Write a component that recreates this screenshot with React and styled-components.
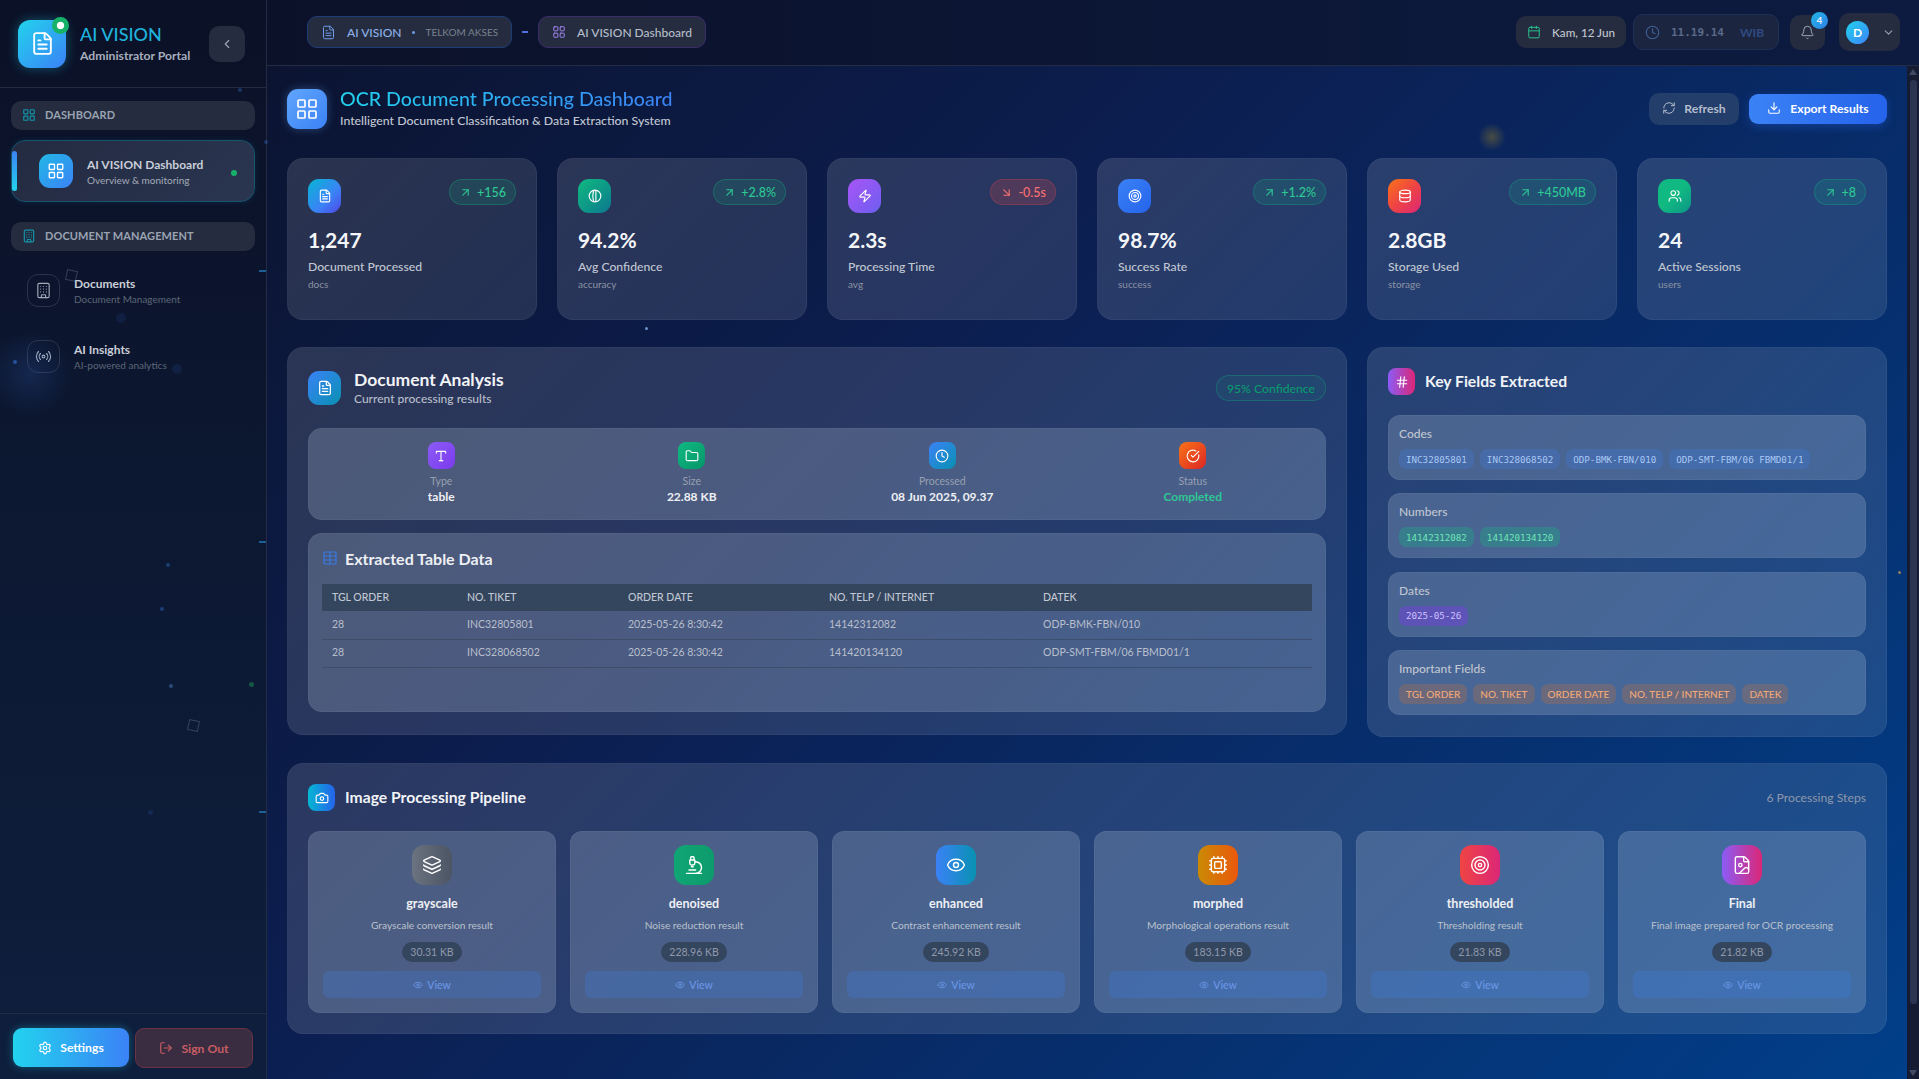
import React from "react";
import styled, { createGlobalStyle } from "styled-components";
import {
  FileText,
  LayoutGrid,
  ChevronLeft,
  ChevronDown,
  Building,
  Radio,
  Calendar,
  Clock,
  Bell,
  RefreshCw,
  Download,
  ArrowUpRight,
  ArrowDownRight,
  Zap,
  Target,
  Database,
  Users,
  Type,
  Folder,
  CircleCheckBig,
  Hash,
  Table,
  Camera,
  Layers,
  Microscope,
  Eye,
  Cpu,
  FileImage,
  Settings,
  LogOut,
} from "lucide-react";

const ConfidenceIcon = ({ size, strokeWidth }) => (
  <svg width={size} height={size} viewBox="0 0 24 24" fill="none" stroke="currentColor" strokeWidth={strokeWidth}>
    <circle cx="12" cy="12" r="10" />
    <path d="M10 2.5C8 8 8 16 10 21.5M13.5 2.5v19" />
  </svg>
);

const stats = [
  { icon: FileText, grad: "#06b6d4, #3b82f6 60%, #4f46e5", change: "+156", value: "1,247", label: "Document Processed", sub: "docs" },
  { icon: ConfidenceIcon, grad: "#10b981, #0d9488 60%, #0e7490", change: "+2.8%", value: "94.2%", label: "Avg Confidence", sub: "accuracy" },
  { icon: Zap, grad: "#a855f7, #6d5ef0", change: "-0.5s", down: true, value: "2.3s", label: "Processing Time", sub: "avg" },
  { icon: Target, grad: "#3b82f6, #2563eb", change: "+1.2%", value: "98.7%", label: "Success Rate", sub: "success" },
  { icon: Database, grad: "#f97316, #ef4444 50%, #db2777", change: "+450MB", value: "2.8GB", label: "Storage Used", sub: "storage" },
  { icon: Users, grad: "#10b981, #10b981 50%, #0d9488", change: "+8", value: "24", label: "Active Sessions", sub: "users" },
];

const infos = [
  { icon: Type, grad: "#8b5cf6, #7c3aed", label: "Type", value: "table" },
  { icon: Folder, grad: "#10b981, #059669", label: "Size", value: "22.88 KB" },
  { icon: Clock, grad: "#3b82f6, #0891b2", label: "Processed", value: "08 Jun 2025, 09.37" },
  { icon: CircleCheckBig, grad: "#f97316, #dc2626", label: "Status", value: "Completed", ok: true },
];

const columns = ["TGL ORDER", "NO. TIKET", "ORDER DATE", "NO. TELP / INTERNET", "DATEK"];
const rows = [
  ["28", "INC32805801", "2025-05-26 8:30:42", "14142312082", "ODP-BMK-FBN/010"],
  ["28", "INC328068502", "2025-05-26 8:30:42", "141420134120", "ODP-SMT-FBM/06 FBMD01/1"],
];

const fields = [
  { label: "Codes", tone: "blue", chips: ["INC32805801", "INC328068502", "ODP-BMK-FBN/010", "ODP-SMT-FBM/06 FBMD01/1"] },
  { label: "Numbers", tone: "green", chips: ["14142312082", "141420134120"] },
  { label: "Dates", tone: "purple", chips: ["2025-05-26"] },
  { label: "Important Fields", tone: "orange", chips: columns },
];

const steps = [
  { icon: Layers, grad: "#6b7280, #4b5563", name: "grayscale", desc: "Grayscale conversion result", size: "30.31 KB" },
  { icon: Microscope, grad: "#10a574, #0d9b6c", name: "denoised", desc: "Noise reduction result", size: "228.96 KB" },
  { icon: Eye, grad: "#3b82f6, #0891b2", name: "enhanced", desc: "Contrast enhancement result", size: "245.92 KB" },
  { icon: Cpu, grad: "#ca8a04, #ea580c", name: "morphed", desc: "Morphological operations result", size: "183.15 KB" },
  { icon: Target, grad: "#ef4444, #db2777", name: "thresholded", desc: "Thresholding result", size: "21.83 KB" },
  { icon: FileImage, grad: "#8b5cf6, #db2777", name: "Final", desc: "Final image prepared for OCR processing", size: "21.82 KB" },
];

const particles = [
  { x: 166, y: 563, s: 4, c: "#3b82f6", o: 0.35 },
  { x: 160, y: 607, s: 4, c: "#3b82f6", o: 0.35 },
  { x: 169, y: 684, s: 4, c: "#60a5fa", o: 0.35 },
  { x: 249, y: 682, s: 5, c: "#22c55e", o: 0.35 },
  { x: 645, y: 327, s: 3, c: "#93c5fd", o: 0.7 },
  { x: 1898, y: 571, s: 3, c: "#d0a050", o: 0.7 },
  { x: 148, y: 810, s: 5, c: "#3b82f6", o: 0.15 },
  { x: 116, y: 313, s: 10, c: "#3b82f6", o: 0.1 },
  { x: 238, y: 88, s: 4, c: "#3b82f6", o: 0.3 },
  { x: 264, y: 140, s: 4, c: "#3b82f6", o: 0.3 },
  { x: 13, y: 360, s: 4, c: "#3b82f6", o: 0.5 },
  { x: 172, y: 364, s: 10, c: "#3b82f6", o: 0.1 },
];

const ticks = [270, 541, 811];

const App = () => {
  return (
    <>
      <GlobalStyle />
      <StPage>
        <StSidebar>
          <StBrand>
            <StLogo>
              <FileText size={25} strokeWidth={1.8} />
              <StLogoDot />
            </StLogo>
            <StBrandText>
              <StBrandName>AI VISION</StBrandName>
              <StBrandSub>Administrator Portal</StBrandSub>
            </StBrandText>
            <StCollapse>
              <ChevronLeft size={14} />
            </StCollapse>
          </StBrand>

          <StNav>
            <StSection>
              <LayoutGrid size={14} color="#1593a8" />
              DASHBOARD
            </StSection>
            <StActiveItem>
              <StActiveBar />
              <StActiveIcon>
                <LayoutGrid size={18} strokeWidth={1.8} />
              </StActiveIcon>
              <StItemText>
                <StItemTitle>AI VISION Dashboard</StItemTitle>
                <StActiveSub>Overview &amp; monitoring</StActiveSub>
              </StItemText>
              <StActiveDot />
            </StActiveItem>

            <StSection $spaced>
              <Building size={14} color="#1593a8" />
              DOCUMENT MANAGEMENT
            </StSection>
            <StItem>
              <StItemIcon>
                <Building size={17} strokeWidth={1.6} />
              </StItemIcon>
              <StItemText>
                <StItemTitle>Documents</StItemTitle>
                <StItemSub>Document Management</StItemSub>
              </StItemText>
            </StItem>
            <StItem>
              <StItemIcon>
                <Radio size={17} strokeWidth={1.6} />
              </StItemIcon>
              <StItemText>
                <StItemTitle>AI Insights</StItemTitle>
                <StItemSub>AI-powered analytics</StItemSub>
              </StItemText>
            </StItem>
          </StNav>

          <StSideFooter>
            <StSettings>
              <Settings size={14} />
              Settings
            </StSettings>
            <StSignOut>
              <LogOut size={14} />
              Sign Out
            </StSignOut>
          </StSideFooter>
        </StSidebar>

        <StRight>
          <StTopbar>
            <StCrumbs>
              <StCrumb $tone="blue">
                <FileText size={15} color="#6f9ce8" strokeWidth={1.6} />
                <StCrumbBrand>AI VISION</StCrumbBrand>
                <StCrumbDot />
                <StCrumbOrg>TELKOM AKSES</StCrumbOrg>
              </StCrumb>
              <StCrumbDash />
              <StCrumb $tone="purple">
                <LayoutGrid size={14} color="#a78bfa" strokeWidth={1.6} />
                <StCrumbPage>AI VISION Dashboard</StCrumbPage>
              </StCrumb>
            </StCrumbs>
            <StTopActions>
              <StDate>
                <Calendar size={14} color="#2bc08f" strokeWidth={1.7} />
                Kam, 12 Jun
              </StDate>
              <StTime>
                <Clock size={15} color="#3f5f93" strokeWidth={1.8} />
                <StClock>11.19.14</StClock>
                <StZone>WIB</StZone>
              </StTime>
              <StBell>
                <Bell size={15} strokeWidth={1.5} />
                <StBadge>4</StBadge>
              </StBell>
              <StUser>
                <StAvatar>D</StAvatar>
                <ChevronDown size={13} color="#94a3b8" />
              </StUser>
            </StTopActions>
          </StTopbar>

          <StBody>
            <StMain>
              <StPageHead>
                <StPageTitleWrap>
                  <StPageIcon>
                    <LayoutGrid size={24} strokeWidth={1.7} />
                  </StPageIcon>
                  <div>
                    <StPageTitle>OCR Document Processing Dashboard</StPageTitle>
                    <StPageSub>Intelligent Document Classification &amp; Data Extraction System</StPageSub>
                  </div>
                </StPageTitleWrap>
                <StHeadActions>
                  <StRefresh>
                    <RefreshCw size={14} strokeWidth={1.7} />
                    Refresh
                  </StRefresh>
                  <StExport>
                    <Download size={14} strokeWidth={1.9} />
                    Export Results
                  </StExport>
                </StHeadActions>
              </StPageHead>

              <StStats>
                {stats.map((stat) => (
                  <StStatCard key={stat.label}>
                    <StStatTop>
                      <StStatIcon $grad={stat.grad}>
                        <stat.icon size={14} strokeWidth={1.9} />
                      </StStatIcon>
                      <StChange $down={stat.down}>
                        {stat.down ? <ArrowDownRight size={13} /> : <ArrowUpRight size={13} />}
                        {stat.change}
                      </StChange>
                    </StStatTop>
                    <StStatValue>{stat.value}</StStatValue>
                    <StStatLabel>{stat.label}</StStatLabel>
                    <StStatSub>{stat.sub}</StStatSub>
                  </StStatCard>
                ))}
              </StStats>

              <StColumns>
                <StAnalysis>
                  <StAnalysisHead>
                    <StTitleRow>
                      <StPanelIcon $grad="#3b82f6, #0891b2">
                        <FileText size={16} strokeWidth={1.9} />
                      </StPanelIcon>
                      <div>
                        <StAnalysisTitle>Document Analysis</StAnalysisTitle>
                        <StAnalysisSub>Current processing results</StAnalysisSub>
                      </div>
                    </StTitleRow>
                    <StConfidence>95% Confidence</StConfidence>
                  </StAnalysisHead>

                  <StInfoStrip>
                    {infos.map((info) => (
                      <StInfo key={info.label}>
                        <StInfoIcon $grad={info.grad}>
                          <info.icon size={14} strokeWidth={1.9} />
                        </StInfoIcon>
                        <StInfoLabel>{info.label}</StInfoLabel>
                        <StInfoValue $ok={info.ok}>{info.value}</StInfoValue>
                      </StInfo>
                    ))}
                  </StInfoStrip>

                  <StTableBox>
                    <StTableTitle>
                      <Table size={16} color="#3b78e0" strokeWidth={1.8} />
                      Extracted Table Data
                    </StTableTitle>
                    <StTable>
                      <thead>
                        <tr>
                          {columns.map((col) => (
                            <StTh key={col}>{col}</StTh>
                          ))}
                        </tr>
                      </thead>
                      <tbody>
                        {rows.map((row) => (
                          <tr key={row[1]}>
                            {row.map((cell) => (
                              <StTd key={cell}>{cell}</StTd>
                            ))}
                          </tr>
                        ))}
                      </tbody>
                    </StTable>
                  </StTableBox>
                </StAnalysis>

                <StKeyFields>
                  <StTitleRow>
                    <StSmallIcon $grad="#8b5cf6, #db2777">
                      <Hash size={14} strokeWidth={2} />
                    </StSmallIcon>
                    <StPanelTitle>Key Fields Extracted</StPanelTitle>
                  </StTitleRow>
                  <StFieldList>
                    {fields.map((field) => (
                      <StField key={field.label}>
                        <StFieldLabel>{field.label}</StFieldLabel>
                        <StChips>
                          {field.chips.map((chip) => (
                            <StChip key={chip} $tone={field.tone}>
                              {chip}
                            </StChip>
                          ))}
                        </StChips>
                      </StField>
                    ))}
                  </StFieldList>
                </StKeyFields>
              </StColumns>

              <StPipeline>
                <StPipelineHead>
                  <StTitleRow>
                    <StSmallIcon $grad="#06b6d4, #2563eb">
                      <Camera size={14} strokeWidth={1.9} />
                    </StSmallIcon>
                    <StPanelTitle>Image Processing Pipeline</StPanelTitle>
                  </StTitleRow>
                  <StStepCount>6 Processing Steps</StStepCount>
                </StPipelineHead>
                <StSteps>
                  {steps.map((step) => (
                    <StStep key={step.name}>
                      <StStepIcon $grad={step.grad}>
                        <step.icon size={20} strokeWidth={1.7} />
                      </StStepIcon>
                      <StStepName>{step.name}</StStepName>
                      <StStepDesc>{step.desc}</StStepDesc>
                      <StStepSize>{step.size}</StStepSize>
                      <StView>
                        <Eye size={10} />
                        View
                      </StView>
                    </StStep>
                  ))}
                </StSteps>
              </StPipeline>
            </StMain>
            <StScrollbar>
              <StScrollArrow />
              <StScrollThumb />
              <StScrollArrow $down />
            </StScrollbar>
          </StBody>
        </StRight>

        {particles.map((p) => (
          <StParticle key={`${p.x}-${p.y}`} $x={p.x} $y={p.y} $s={p.s} $c={p.c} $o={p.o} />
        ))}
        {ticks.map((y) => (
          <StTick key={y} $y={y} />
        ))}
        <StGlow $x={30} $y={373} $s={42} $c="rgba(59,130,246,0.16)" />
        <StGlow $x={1492} $y={137} $s={14} $c="rgba(234,179,8,0.28)" />
        <StFloatSquare $x={188} $y={720} />
        <StFloatSquare $x={66} $y={270} />
      </StPage>
    </>
  );
};

const GlobalStyle = createGlobalStyle`
  * {
    box-sizing: border-box;
  }
  body {
    margin: 0;
    font-family: "Lato", "Noto Sans", sans-serif;
    color: #fff;
    background: #0b1026;
  }
`;

const StPage = styled.div`
  position: relative;
  display: grid;
  grid-template-columns: 267px 1fr;
  height: 100vh;
  overflow: hidden;
  background: linear-gradient(135deg, #0b1026 0%, #0c1f52 45%, #013f8a 100%);
`;

const StSidebar = styled.aside`
  display: flex;
  flex-direction: column;
  height: 100vh;
  background: linear-gradient(180deg, #0b1127 0%, #0e1f3d 100%);
  border-right: 1px solid #232c42;
`;

const StBrand = styled.div`
  display: flex;
  align-items: center;
  height: 88px;
  padding: 0 21px 0 18px;
  border-bottom: 1px solid #232c42;
`;

const StLogo = styled.div`
  position: relative;
  flex: none;
  display: flex;
  align-items: center;
  justify-content: center;
  width: 48px;
  height: 48px;
  border-radius: 12px;
  color: #fff;
  background: linear-gradient(135deg, #22d3ee, #3b82f6);
  box-shadow: 0 0 12px rgba(34, 211, 238, 0.35);
`;

const StLogoDot = styled.span`
  position: absolute;
  top: -3px;
  right: -3px;
  width: 17px;
  height: 17px;
  border-radius: 50%;
  background: radial-gradient(circle, #fff 28%, #17b26a 34%);
`;

const StBrandText = styled.div`
  flex: 1;
  margin-left: 14px;
`;

const StBrandName = styled.div`
  font-size: 18px;
  line-height: 23px;
  font-weight: 500;
  color: #1fb3dc;
`;

const StBrandSub = styled.div`
  font-size: 12.2px;
  line-height: 19px;
  font-weight: 700;
  color: #a7afbd;
  white-space: nowrap;
`;

const StCollapse = styled.button`
  display: flex;
  align-items: center;
  justify-content: center;
  width: 36px;
  height: 36px;
  padding: 0;
  border: 0;
  border-radius: 10px;
  color: #9ca3af;
  background: #252c3f;
`;

const StNav = styled.nav`
  display: flex;
  flex-direction: column;
  padding: 13px 11px;
`;

const StSection = styled.div`
  display: flex;
  align-items: center;
  gap: 9px;
  height: 29px;
  margin-top: ${({ $spaced }) => ($spaced ? "20px" : "0")};
  margin-bottom: ${({ $spaced }) => ($spaced ? "8px" : "10px")};
  padding: 0 11px 2px;
  border-radius: 10px;
  font-size: 11px;
  font-weight: 700;
  letter-spacing: 0.1px;
  color: #9aa3b2;
  background: #252c3f;
`;

const StItem = styled.div`
  display: flex;
  align-items: center;
  gap: 14px;
  height: 62px;
  margin-bottom: 4px;
  padding-left: 16px;
`;

const StActiveItem = styled(StItem)`
  position: relative;
  margin-bottom: 0;
  padding-left: 27px;
  border: 1px solid #17546f;
  border-radius: 14px;
  background: linear-gradient(135deg, #232b41, #2a3550);
  box-shadow: 0 0 6px rgba(34, 211, 238, 0.1);
`;

const StActiveBar = styled.span`
  position: absolute;
  left: 0;
  top: 10px;
  bottom: 10px;
  width: 5px;
  border-radius: 3px;
  background: linear-gradient(180deg, #3b82f6, #22d3ee);
`;

const StActiveIcon = styled.div`
  display: flex;
  align-items: center;
  justify-content: center;
  width: 34px;
  height: 34px;
  border-radius: 11px;
  color: #fff;
  background: linear-gradient(135deg, #22b8e6, #3b82f6);
`;

const StItemIcon = styled.div`
  display: flex;
  align-items: center;
  justify-content: center;
  width: 33px;
  height: 33px;
  border: 1px solid #2a3348;
  border-radius: 11px;
  color: #a4acba;
`;

const StItemText = styled.div`
  display: flex;
  flex-direction: column;
`;

const StItemTitle = styled.span`
  font-size: 12px;
  line-height: 17px;
  font-weight: 700;
  color: #c9ced8;
`;

const StItemSub = styled.span`
  font-size: 10px;
  line-height: 14px;
  color: #5d6678;
`;

const StActiveSub = styled(StItemSub)`
  color: #a3abb9;
`;

const StActiveDot = styled.span`
  position: absolute;
  right: 17px;
  top: 29px;
  width: 6px;
  height: 6px;
  border-radius: 50%;
  background: #17b26a;
`;

const StSideFooter = styled.div`
  display: flex;
  gap: 6px;
  margin-top: auto;
  padding: 14px 13px 11px;
  border-top: 1px solid #232c42;
`;

const StSettings = styled.button`
  display: flex;
  align-items: center;
  justify-content: center;
  gap: 8px;
  width: 116px;
  height: 39px;
  border: 0;
  border-radius: 9px;
  font: 700 12.2px "Lato", sans-serif;
  color: #fff;
  background: linear-gradient(90deg, #22d3ee, #3b82f6);
  box-shadow: 0 0 8px rgba(34, 211, 238, 0.35);
`;

const StSignOut = styled.button`
  display: flex;
  align-items: center;
  justify-content: center;
  gap: 8px;
  width: 118px;
  height: 40px;
  border: 1px solid #6a3243;
  border-radius: 9px;
  font: 700 12.2px "Lato", sans-serif;
  color: #c85d63;
  background: #3a2d42;
`;

const StRight = styled.div`
  display: flex;
  flex-direction: column;
  min-width: 0;
  height: 100vh;
`;

const StTopbar = styled.header`
  flex: none;
  display: flex;
  align-items: center;
  justify-content: space-between;
  height: 66px;
  padding: 0 19px 1px 40px;
  border-bottom: 1px solid #232c42;
  background: linear-gradient(90deg, #0b1128, #0d1b41);
`;

const StCrumbs = styled.div`
  display: flex;
  align-items: center;
  gap: 10px;
`;

const StCrumb = styled.div`
  display: flex;
  align-items: center;
  height: 32px;
  padding: 0 13px;
  border: 1px solid ${({ $tone }) => ($tone === "blue" ? "#1f3d75" : "#3b2c6b")};
  border-radius: 10px;
  background: #252c3f;
`;

const StCrumbBrand = styled.span`
  margin-left: 11px;
  font-size: 12px;
  font-weight: 500;
  color: #8fb0e8;
`;

const StCrumbDot = styled.span`
  width: 3px;
  height: 3px;
  margin: 0 11px 0 10px;
  border-radius: 50%;
  background: #6f9ce8;
`;

const StCrumbOrg = styled.span`
  font-size: 10px;
  color: #79828f;
`;

const StCrumbDash = styled.span`
  width: 6px;
  height: 2px;
  background: #4f6fe0;
`;

const StCrumbPage = styled.span`
  margin-left: 11px;
  font-size: 12px;
  font-weight: 500;
  color: #b6bdc9;
`;

const StTopActions = styled.div`
  display: flex;
  align-items: center;
`;

const StDate = styled.div`
  display: flex;
  align-items: center;
  gap: 11px;
  height: 32px;
  padding: 0 11px;
  border-radius: 10px;
  font-size: 11.7px;
  font-weight: 500;
  color: #c1c6cf;
  background: #252c3f;
`;

const StTime = styled.div`
  display: flex;
  align-items: center;
  width: 146px;
  height: 36px;
  margin-left: 7px;
  padding: 0 11px;
  border: 1px solid #1f2f57;
  border-radius: 10px;
  background: #1c2540;
`;

const StClock = styled.span`
  margin-left: 11px;
  font: 700 11px "DejaVu Sans Mono", monospace;
  color: #5a6a8a;
`;

const StZone = styled.span`
  margin-left: 16px;
  font-size: 12px;
  font-weight: 700;
  color: #2f4a80;
`;

const StBell = styled.div`
  position: relative;
  display: flex;
  align-items: center;
  justify-content: center;
  width: 35px;
  height: 35px;
  margin-left: 11px;
  border-radius: 10px;
  color: #a4acba;
  background: #252c3f;
`;

const StBadge = styled.span`
  position: absolute;
  top: -3px;
  right: -3px;
  display: flex;
  align-items: center;
  justify-content: center;
  width: 17px;
  height: 17px;
  border-radius: 50%;
  font-size: 10px;
  font-weight: 900;
  color: #dbeafe;
  background: linear-gradient(135deg, #22b8e6, #2f7fe8);
`;

const StUser = styled.div`
  display: flex;
  align-items: center;
  gap: 13px;
  width: 61px;
  height: 38px;
  margin-left: 14px;
  padding-left: 7px;
  border-radius: 10px;
  background: #252c3f;
`;

const StAvatar = styled.div`
  display: flex;
  align-items: center;
  justify-content: center;
  width: 23px;
  height: 23px;
  border-radius: 50%;
  font-size: 12px;
  font-weight: 700;
  background: linear-gradient(135deg, #22d3ee, #3b82f6);
`;

const StBody = styled.div`
  flex: 1;
  display: flex;
  min-height: 0;
`;

const StMain = styled.main`
  flex: 1;
  min-width: 0;
  overflow: hidden;
  padding: 23px 20px 0;
`;

const StScrollbar = styled.div`
  flex: none;
  display: flex;
  flex-direction: column;
  align-items: center;
  justify-content: space-between;
  width: 12px;
  padding: 3px 0;
  background: #151b33;
`;

const StScrollArrow = styled.span`
  width: 0;
  height: 0;
  border-left: 4px solid transparent;
  border-right: 4px solid transparent;
  border-bottom: ${({ $down }) => ($down ? "0" : "6px solid #3f4a66")};
  border-top: ${({ $down }) => ($down ? "6px solid #3f4a66" : "0")};
`;

const StScrollThumb = styled.span`
  width: 7px;
  height: 924px;
  margin-bottom: 62px;
  border-radius: 4px;
  background: #2b3552;
`;

const StPageHead = styled.div`
  display: flex;
  align-items: center;
  justify-content: space-between;
  height: 40px;
  margin-bottom: 29px;
`;

const StPageTitleWrap = styled.div`
  display: flex;
  align-items: center;
  gap: 13px;
`;

const StPageIcon = styled.div`
  display: flex;
  align-items: center;
  justify-content: center;
  width: 40px;
  height: 40px;
  border-radius: 11px;
  color: #fff;
  background: linear-gradient(135deg, #60a5fa, #3b82f6);
  box-shadow: 0 0 10px rgba(96, 165, 250, 0.35);
`;

const StPageTitle = styled.h1`
  margin: -2px 0 0;
  font-size: 19.6px;
  line-height: 25px;
  font-weight: 500;
  white-space: nowrap;
  color: transparent;
  background: linear-gradient(90deg, #22d3ee, #3b82f6);
  background-clip: text;
  -webkit-background-clip: text;
`;

const StPageSub = styled.p`
  margin: 1px 0 0;
  font-size: 12.3px;
  line-height: 18px;
  font-weight: 500;
  color: #c2c8d3;
`;

const StHeadActions = styled.div`
  display: flex;
  align-items: center;
  gap: 10px;
`;

const StRefresh = styled.button`
  display: flex;
  align-items: center;
  justify-content: center;
  gap: 8px;
  width: 90px;
  height: 32px;
  padding: 0 0 2px;
  border: 0;
  border-radius: 10px;
  font: 700 12.2px "Lato", sans-serif;
  color: #b4bdcc;
  background: #233e6b;
`;

const StExport = styled.button`
  display: flex;
  align-items: center;
  justify-content: center;
  gap: 9px;
  width: 138px;
  height: 30px;
  padding: 0 0 2px;
  border: 0;
  border-radius: 9px;
  font: 700 12.2px "Lato", sans-serif;
  color: #fff;
  background: linear-gradient(90deg, #3b82f6, #2563eb);
  box-shadow: 0 3px 10px rgba(37, 99, 235, 0.35);
`;

const StStats = styled.section`
  display: grid;
  grid-template-columns: repeat(6, 1fr);
  gap: 20px;
  margin-bottom: 27px;
`;

const glass = `
  border: 1px solid rgba(255, 255, 255, 0.04);
  background: linear-gradient(135deg, rgba(255, 255, 255, 0.13), rgba(255, 255, 255, 0.1));
`;

const inset = `
  border: 1px solid rgba(255, 255, 255, 0.04);
  background: rgba(190, 205, 225, 0.24);
`;

const StStatCard = styled.article`
  ${glass}
  height: 162px;
  padding: 20px;
  border-radius: 16px;
`;

const StStatTop = styled.div`
  display: flex;
  align-items: flex-start;
  justify-content: space-between;
  height: 42px;
`;

const StStatIcon = styled.div`
  display: flex;
  align-items: center;
  justify-content: center;
  width: 33px;
  height: 34px;
  border-radius: 11px;
  color: #fff;
  background: linear-gradient(135deg, ${({ $grad }) => $grad});
`;

const StChange = styled.span`
  display: flex;
  align-items: center;
  gap: 5px;
  height: 26px;
  padding: 0 9px;
  border: 1px solid ${({ $down }) => ($down ? "rgba(239,68,68,0.25)" : "rgba(16,185,129,0.3)")};
  border-radius: 13px;
  font-size: 12.5px;
  font-weight: 500;
  color: ${({ $down }) => ($down ? "#f87171" : "#2fc794")};
  background: ${({ $down }) => ($down ? "rgba(239,68,68,0.2)" : "rgba(16,185,129,0.15)")};
`;

const StStatValue = styled.div`
  margin-top: 5px;
  font-size: 21px;
  line-height: 28px;
  font-weight: 700;
  color: #f4f6f9;
`;

const StStatLabel = styled.div`
  margin-top: 4px;
  font-size: 12.2px;
  line-height: 18px;
  font-weight: 500;
  color: #c1c7d2;
`;

const StStatSub = styled.div`
  margin-top: 1px;
  font-size: 10px;
  line-height: 15px;
  color: #8a93a4;
`;

const StColumns = styled.section`
  display: grid;
  grid-template-columns: 1060px 520px;
  gap: 20px;
  align-items: start;
  margin-bottom: 26px;
`;

const StAnalysis = styled.div`
  ${glass}
  height: 388px;
  padding: 23px 20px;
  border-radius: 16px;
`;

const StAnalysisHead = styled.div`
  display: flex;
  align-items: center;
  justify-content: space-between;
  height: 34px;
  margin-bottom: 23px;
`;

const StTitleRow = styled.div`
  display: flex;
  align-items: center;
  gap: 10px;
`;

const StPanelIcon = styled(StStatIcon)`
  margin-right: 3px;
`;

const StSmallIcon = styled.div`
  display: flex;
  align-items: center;
  justify-content: center;
  width: 27px;
  height: 27px;
  border-radius: 8px;
  color: #fff;
  background: linear-gradient(90deg, ${({ $grad }) => $grad});
`;

const StAnalysisTitle = styled.div`
  margin-top: -1px;
  font-size: 17.5px;
  line-height: 21px;
  font-weight: 700;
  color: #f1f3f7;
`;

const StAnalysisSub = styled.div`
  margin-top: 1px;
  font-size: 12px;
  line-height: 16px;
  font-weight: 500;
  color: #b7becb;
`;

const StConfidence = styled.span`
  display: flex;
  align-items: center;
  height: 26px;
  padding: 0 10px;
  border: 1px solid rgba(16, 185, 129, 0.3);
  border-radius: 13px;
  font-size: 12.2px;
  font-weight: 500;
  color: #0a9a6e;
  background: rgba(16, 185, 129, 0.08);
`;

const StInfoStrip = styled.div`
  ${inset}
  display: grid;
  grid-template-columns: repeat(4, 1fr);
  gap: 16px;
  height: 92px;
  margin-bottom: 13px;
  padding: 13px 15px 0;
  border-radius: 14px;
`;

const StInfo = styled.div`
  display: flex;
  flex-direction: column;
  align-items: center;
`;

const StInfoIcon = styled.div`
  display: flex;
  align-items: center;
  justify-content: center;
  width: 27px;
  height: 27px;
  border-radius: 8px;
  color: #fff;
  background: linear-gradient(135deg, ${({ $grad }) => $grad});
`;

const StInfoLabel = styled.span`
  margin-top: 4px;
  font-size: 10.5px;
  line-height: 16px;
  color: #97a0b0;
`;

const StInfoValue = styled.span`
  font-size: 12px;
  line-height: 15px;
  font-weight: 700;
  color: ${({ $ok }) => ($ok ? "#2fc794" : "#eef0f4")};
`;

const StTableBox = styled.div`
  ${inset}
  height: 179px;
  padding: 13px 13px 14px;
  border-radius: 14px;
`;

const StTableTitle = styled.h3`
  display: flex;
  align-items: center;
  gap: 7px;
  height: 22px;
  margin: 0 0 15px;
  font-size: 16px;
  font-weight: 700;
  color: #eef0f4;
`;

const StTable = styled.table`
  width: 100%;
  border-collapse: collapse;
  table-layout: fixed;

  th:nth-child(1) { width: 135px; }
  th:nth-child(2) { width: 161px; }
  th:nth-child(3) { width: 201px; }
  th:nth-child(4) { width: 214px; }
`;

const StTh = styled.th`
  height: 27px;
  padding: 0 10px 2px;
  text-align: left;
  font-size: 10.5px;
  font-weight: 500;
  color: #c2c8d3;
  background: #34455e;
`;

const StTd = styled.td`
  height: 28px;
  padding: 0 10px 2px;
  border-bottom: 1px solid rgba(51, 65, 85, 0.55);
  font-size: 10.5px;
  color: #b8bfcc;
`;

const StKeyFields = styled.div`
  ${glass}
  height: 390px;
  padding: 20px;
  border-radius: 16px;
`;

const StPanelTitle = styled.h2`
  margin: -2px 0 0;
  font-size: 15.7px;
  font-weight: 700;
  color: #f1f3f7;
`;

const StFieldList = styled.div`
  display: flex;
  flex-direction: column;
  gap: 13.4px;
  margin-top: 20px;
`;

const StField = styled.div`
  ${inset}
  height: 65px;
  padding: 10px;
  border-radius: 12px;
`;

const StFieldLabel = styled.div`
  font-size: 12px;
  line-height: 16px;
  font-weight: 500;
  color: #c0c6d1;
`;

const chipTones = {
  blue: ["rgba(59,130,246,0.22)", "#a9c8f5", "DejaVu Sans Mono"],
  green: ["rgba(16,185,129,0.3)", "#6fe6b6", "DejaVu Sans Mono"],
  purple: ["rgba(124,58,237,0.4)", "#cdc0fe", "DejaVu Sans Mono"],
  orange: ["rgba(249,115,22,0.2)", "#f2a877", "Lato"],
};

const StChips = styled.div`
  display: flex;
  gap: 6px;
  margin-top: 7px;
`;

const StChip = styled.span`
  display: flex;
  align-items: center;
  height: 20px;
  padding: 0 7px;
  border-radius: 7px;
  white-space: nowrap;
  font-family: "${({ $tone }) => chipTones[$tone][2]}", monospace;
  font-size: ${({ $tone }) => ($tone === "orange" ? "10px" : "9.2px")};
  font-weight: ${({ $tone }) => ($tone === "orange" ? 500 : 400)};
  color: ${({ $tone }) => chipTones[$tone][1]};
  background: ${({ $tone }) => chipTones[$tone][0]};
`;

const StPipeline = styled.section`
  ${glass}
  height: 271px;
  padding: 20px;
  border-radius: 16px;
`;

const StPipelineHead = styled.div`
  display: flex;
  align-items: center;
  justify-content: space-between;
  height: 27px;
  margin-bottom: 20px;
`;

const StStepCount = styled.span`
  font-size: 12.2px;
  color: #8e98aa;
`;

const StSteps = styled.div`
  display: grid;
  grid-template-columns: repeat(6, 1fr);
  gap: 14px;
`;

const StStep = styled.div`
  ${inset}
  display: flex;
  flex-direction: column;
  align-items: center;
  height: 182px;
  padding: 13px 14px;
  border-radius: 12px;
`;

const StStepIcon = styled.div`
  flex: none;
  display: flex;
  align-items: center;
  justify-content: center;
  width: 40px;
  height: 40px;
  border-radius: 12px;
  color: #fff;
  background: linear-gradient(90deg, ${({ $grad }) => $grad});
`;

const StStepName = styled.div`
  margin-top: 10px;
  font-size: 12.5px;
  line-height: 17px;
  font-weight: 700;
  color: #eef0f4;
`;

const StStepDesc = styled.div`
  margin-top: 6px;
  font-size: 10.2px;
  line-height: 15px;
  white-space: nowrap;
  color: #bac1cd;
`;

const StStepSize = styled.div`
  display: flex;
  align-items: center;
  height: 20px;
  margin-top: 9px;
  padding: 0 8px;
  border-radius: 10px;
  font-size: 10.5px;
  color: #8f99ab;
  background: #34455e;
`;

const StView = styled.button`
  display: flex;
  align-items: center;
  justify-content: center;
  gap: 4px;
  width: 100%;
  height: 27px;
  margin-top: 9px;
  border: 0;
  border-radius: 6px;
  font: 500 10.5px "Lato", sans-serif;
  color: #6b97e6;
  background: rgba(59, 130, 246, 0.22);
`;

const StParticle = styled.span`
  position: absolute;
  left: ${({ $x }) => $x}px;
  top: ${({ $y }) => $y}px;
  width: ${({ $s }) => $s}px;
  height: ${({ $s }) => $s}px;
  border-radius: 50%;
  background: ${({ $c }) => $c};
  opacity: ${({ $o }) => $o};
  pointer-events: none;
`;

const StTick = styled.span`
  position: absolute;
  left: 259px;
  top: ${({ $y }) => $y}px;
  width: 7px;
  height: 2px;
  background: #1c5f96;
  pointer-events: none;
`;

const StGlow = styled.span`
  position: absolute;
  left: ${({ $x, $s }) => $x - $s}px;
  top: ${({ $y, $s }) => $y - $s}px;
  width: ${({ $s }) => $s * 2}px;
  height: ${({ $s }) => $s * 2}px;
  border-radius: 50%;
  background: radial-gradient(circle, ${({ $c }) => $c}, transparent 70%);
  pointer-events: none;
`;

const StFloatSquare = styled.span`
  position: absolute;
  left: ${({ $x }) => $x}px;
  top: ${({ $y }) => $y}px;
  width: 11px;
  height: 11px;
  border: 1px solid rgba(148, 163, 184, 0.3);
  transform: rotate(12deg);
  pointer-events: none;
`;

export default App;
